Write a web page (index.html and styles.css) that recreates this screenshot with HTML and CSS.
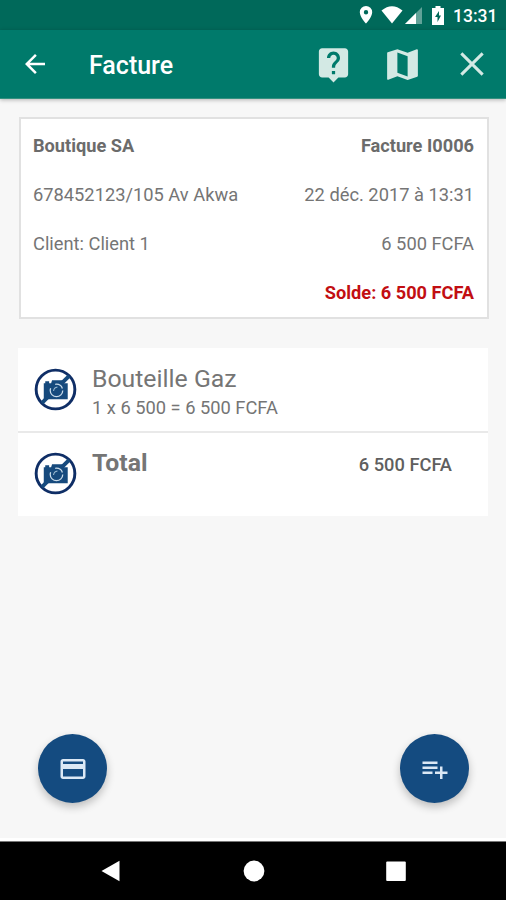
FILE: index.html
```html
<!DOCTYPE html>
<html lang="fr">
<head>
<meta charset="utf-8">
<title>Facture</title>
<link rel="stylesheet" href="styles.css">
</head>
<body>
<svg class="defs" aria-hidden="true">
  <symbol id="no-photo" viewBox="0 0 44 44">
    <circle cx="22" cy="22" r="19.800" fill="#fff" stroke="#0f2e66" stroke-width="3"/>
    <path d="M10 15.500h1.500v-2h4v2h2l1-3h11l1 3h4v16.500h-24.500z" fill="#164a7d"/>
    <path d="M8 36L36 8" stroke="#164a7d" stroke-width="4"/>
    <circle cx="23" cy="23" r="6.400" fill="none" stroke="#c9dbe9" stroke-width="1.300" stroke-dasharray="22 6 9 3.200"/>
    <path d="M20 23.500q.5-3.500 4-4" fill="none" stroke="#9dbbd2" stroke-width="1.100"/>
  </symbol>
</svg>
<div class="screen">
  <header class="status">
    <svg class="pin" viewBox="0 0 14 20"><path fill-rule="evenodd" d="M7 1a6.200 6.200 0 0 0-6.200 6.200C.8 12 7 18.500 7 18.500s6.200-6.500 6.200-11.300A6.200 6.200 0 0 0 7 1zm0 4a2.200 2.200 0 1 1 0 4.400A2.200 2.200 0 0 1 7 5z"/></svg>
    <svg class="wifi" viewBox="0 0 22 18"><path d="M.5 4.500Q11-4 21.500 4.500L11 17.500z"/></svg>
    <svg class="signal" viewBox="0 0 17 17"><path opacity=".38" d="M17 0v17H0z"/><path d="M11 6v11H0z"/></svg>
    <svg class="battery" viewBox="0 0 12 19"><path fill-rule="evenodd" d="M3.500 0h5v2H12v17H0V2h3.500zM7 5L3 11h2.500v5L9 9.500H7z"/></svg>
    <span class="clock">13:31</span>
  </header>
  <div class="appbar">
    <svg class="back" viewBox="0 0 24 24"><path d="M20 11H7.830l5.590-5.590L12 4l-8 8 8 8 1.410-1.410L7.830 13H20v-2z"/></svg>
    <h1>Facture</h1>
    <svg class="action help" viewBox="0 0 24 24"><path d="M19 2H5c-1.110 0-2 .9-2 2v14c0 1.100.89 2 2 2h4l3 3 3-3h4c1.100 0 2-.9 2-2V4c0-1.100-.9-2-2-2zm-6 16h-2v-2h2v2zm2.070-7.750l-.9.920C13.450 11.900 13 12.500 13 14h-2v-.5c0-1.100.45-2.100 1.170-2.830l1.240-1.260c.37-.36.590-.86.590-1.410 0-1.100-.9-2-2-2s-2 .9-2 2H8c0-2.210 1.790-4 4-4s4 1.790 4 4c0 .88-.36 1.680-.93 2.250z"/></svg>
    <svg class="action map" viewBox="0 0 24 24"><path d="M20.500 3l-.16.030L15 5.100 9 3 3.360 4.900c-.21.070-.36.250-.36.480V20.500c0 .28.220.5.500.5l.16-.03L9 18.900l6 2.100 5.640-1.900c.21-.07.360-.25.360-.48V3.500c0-.28-.22-.5-.5-.5zM15 19l-6-2.110V5l6 2.110V19z"/></svg>
    <svg class="action close" viewBox="0 0 24 24"><path d="M5.600 5.600l12.800 12.800M18.400 5.600L5.600 18.400"/></svg>
  </div>
  <main>
    <section class="summary">
      <div class="line strong"><span>Boutique SA</span><span>Facture I0006</span></div>
      <div class="line"><span class="address">678452123/105 Av Akwa</span><span>22 déc. 2017 à 13:31</span></div>
      <div class="line"><span>Client: Client 1</span><span>6 500 FCFA</span></div>
      <div class="line due"><span>Solde: 6 500 FCFA</span></div>
    </section>
    <section class="items">
      <div class="item">
        <svg class="thumb"><use href="#no-photo"/></svg>
        <div class="info"><div class="name">Bouteille Gaz</div><div class="detail">1 x 6 500 = 6 500 FCFA</div></div>
      </div>
      <div class="item total">
        <svg class="thumb"><use href="#no-photo"/></svg>
        <div class="info"><div class="name">Total</div></div>
        <div class="amount">6 500 FCFA</div>
      </div>
    </section>
    <div class="fabs">
      <div class="fab"><svg viewBox="0 0 24 24"><path d="M20 4H4c-1.110 0-1.990.89-1.990 2L2 18c0 1.110.89 2 2 2h16c1.110 0 2-.89 2-2V6c0-1.110-.89-2-2-2zm0 14H4v-6h16v6zm0-10H4V6h16v2z"/></svg></div>
      <div class="fab"><svg viewBox="0 0 24 24"><path d="M14 10H2v2h12v-2zm0-4H2v2h12V6zm4 8v-4h-2v4h-4v2h4v4h2v-4h4v-2h-4zM2 16h8v-2H2v2z"/></svg></div>
    </div>
  </main>
  <nav>
    <svg viewBox="0 0 22 22"><path d="M1.500 11L19.500 .8v20.400z"/></svg>
    <svg viewBox="0 0 22 22"><circle cx="11" cy="11" r="10.400"/></svg>
    <svg viewBox="0 0 22 22"><rect x="1.200" y="1.400" width="19.600" height="19.600" rx="1"/></svg>
  </nav>
</div>
</body>
</html>
```
FILE: styles.css
```css
* { box-sizing: border-box; }
body { margin: 0; font-family: Roboto, sans-serif; font-size: 18.3px; color: #757575; }
svg { display: block; flex: none; }
.defs { position: absolute; width: 0; height: 0; }
.screen { width: 506px; height: 900px; display: flex; flex-direction: column; background: #f7f7f7; overflow: hidden; }

.status { height: 30px; flex: none; display: flex; align-items: center; justify-content: flex-end; padding-right: 10px; background: #00695a; color: #fff; }
.status svg { fill: #fff; }
.pin { width: 14px; height: 20px; margin-right: 8px; }
.wifi { width: 22px; height: 18px; margin-right: 2px; }
.signal { width: 17px; height: 17px; margin-right: 10px; }
.battery { width: 12px; height: 19px; margin-right: 9px; }
.clock { width: 43px; font-size: 17.5px; font-weight: 500; line-height: 32px; white-space: nowrap; padding-top: 1px; }

.appbar { height: 69px; flex: none; display: flex; align-items: center; padding: 0 14px 0 20px; background: #007a6b; border-bottom: 1px solid #33907f; box-shadow: 0 1px 4px rgba(0, 0, 0, .28); z-index: 1; }
.appbar h1 { margin: 4px auto 0 39px; font-size: 25px; font-weight: 500; line-height: 30px; color: #fff; }
.back { width: 30px; height: 30px; fill: #fff; }
.action { fill: #d3e9e4; }
.help { width: 39px; height: 39px; margin-right: 29px; }
.map { width: 41px; height: 41px; margin-right: 29px; }
.close { width: 40px; height: 40px; stroke: #d3e9e4; stroke-width: 1.8; }

main { flex: 1; display: flex; flex-direction: column; padding: 18px 18px 0; border-bottom: 3px solid #fff; }
.summary { height: 202px; margin-left: 1px; width: 470px; padding: 2px 13px 2px 12px; background: #fff; border: 2px solid #e1e1e1; }
.line { height: 49px; display: flex; justify-content: space-between; line-height: 49px; white-space: nowrap; }
.strong { font-weight: 700; font-size: 18.2px; color: #6b6b6b; }
.due { justify-content: flex-end; font-weight: 700; font-size: 18.2px; color: #c20e12; }

.items { margin-top: 29px; width: 470px; background: #fff; }
.item { height: 83px; display: flex; padding-left: 16px; }
.item:first-child { height: 85px; border-bottom: 2px solid #e9e9e9; }
.thumb { width: 43px; height: 43px; margin-top: 20px; }
.total .thumb { margin-top: 19px; }
.info { margin: 16px 0 0 15px; }
.name { font-size: 24.8px; line-height: 30px; }
.detail { line-height: 28px; }
.total .info { margin-top: 15px; }
.total .name { font-weight: 700; }
.amount { margin: 18px 36px 0 auto; font-weight: 500; line-height: 28px; color: #5f5f5f; }

.fabs { margin-top: auto; display: flex; justify-content: space-between; padding: 0 19px 35px 20px; }
.fab { width: 69px; height: 69px; border-radius: 50%; background: #144b80; display: flex; align-items: center; justify-content: center; box-shadow: 0 4px 8px rgba(0, 0, 0, .24); }
.fab svg { width: 30px; height: 30px; fill: #dbe8f5; }

nav { height: 59px; flex: none; display: flex; justify-content: space-between; align-items: center; padding: 0 99px 0 100px; background: #000; border-top: 1px solid #777; }
nav svg { width: 22px; height: 22px; fill: #fff; }
```
